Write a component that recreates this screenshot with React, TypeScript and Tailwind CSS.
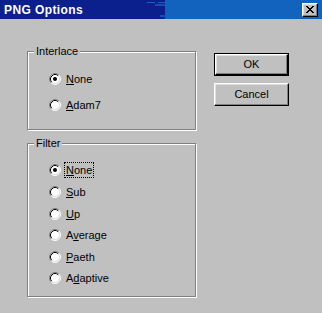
import React from "react";

function Radio({ checked }: { checked?: boolean }) {
  return (
    <svg width="12" height="12" viewBox="0 0 12 12" className="shrink-0">
      <circle cx="6" cy="6" r="5" fill="#ffffff" />
      <path d="M2.11 9.89 A5.5 5.5 0 0 1 9.89 2.11" fill="none" stroke="#808080" strokeWidth="1" />
      <path d="M9.89 2.11 A5.5 5.5 0 0 1 2.11 9.89" fill="none" stroke="#ffffff" strokeWidth="1" />
      <path d="M2.82 9.18 A4.5 4.5 0 0 1 9.18 2.82" fill="none" stroke="#000000" strokeWidth="1" />
      <path d="M9.18 2.82 A4.5 4.5 0 0 1 2.82 9.18" fill="none" stroke="#dfdfdf" strokeWidth="1" />
      {checked && <circle cx="6" cy="6" r="2" fill="#000000" />}
    </svg>
  );
}

function Label({ pre, key_, post }: { pre: string; key_: string; post: string }) {
  return (
    <>
      {pre}
      <span className="underline underline-offset-[1px]">{key_}</span>
      {post}
    </>
  );
}

function Row({
  h,
  checked,
  focus,
  pre,
  k,
  post,
}: {
  h: string;
  checked?: boolean;
  focus?: boolean;
  pre: string;
  k: string;
  post: string;
}) {
  return (
    <div className={`flex items-center ${h}`}>
      <Radio checked={checked} />
      {focus ? (
        <span className="ml-[3px] border border-dotted border-black px-[1px] leading-[14px]">
          <Label pre={pre} key_={k} post={post} />
        </span>
      ) : (
        <span className="ml-[5px] leading-[14px]">
          <Label pre={pre} key_={k} post={post} />
        </span>
      )}
    </div>
  );
}

function Group({ title, h, pt, children }: { title: string; h: string; pt: string; children: React.ReactNode }) {
  return (
    <div
      className={`relative w-[169px] ${h} border border-[#808080] shadow-[inset_1px_1px_0_#ffffff,1px_1px_0_#ffffff] ${pt} pl-[21px]`}
    >
      <span className="absolute left-[6px] top-[-8px] bg-[#c0c0c0] px-[2px] leading-[14px]">{title}</span>
      {children}
    </div>
  );
}

const btnInner =
  "flex items-center justify-center border border-t-white border-l-white border-b-black border-r-black shadow-[inset_-1px_-1px_0_#808080,inset_1px_1px_0_#dfdfdf]";

export default function App() {
  return (
    <div className="w-[322px] h-[313px] overflow-hidden bg-[#c0c0c0] font-['Liberation_Sans',Arial,sans-serif] text-[11px] text-black">
      <div className="relative flex h-[19px] items-center bg-[linear-gradient(to_right,#0b1f8d_0,#0b1f8d_165px,#1163be_165px,#1163be_100%)]">
        <div className="absolute left-[147px] top-[2px] h-[1px] w-[8px] bg-[#1a5ec0]" />
        <div className="absolute left-[158px] top-[2px] h-[1px] w-[7px] bg-[#1a5ec0]" />
        <div className="absolute left-[155px] top-[4px] h-[2px] w-[10px] bg-[#1552b0]" />
        <div className="absolute left-[160px] top-[15px] h-[2px] w-[6px] bg-[#1552b0]" />
        <span className="relative pl-[4px] text-[12px] font-bold leading-none tracking-[0.4px] text-white">PNG Options</span>
        <div className="relative ml-auto mr-[4px] flex h-[14px] w-[16px] items-center justify-center border border-t-white border-l-white border-b-black border-r-black bg-[#c0c0c0] shadow-[inset_-1px_-1px_0_#808080,inset_1px_1px_0_#dfdfdf]">
          <svg width="8" height="7" viewBox="0 0 8 7" shapeRendering="crispEdges">
            <path
              d="M0 0h2v1H0zM6 0h2v1H6zM1 1h2v1H1zM5 1h2v1H5zM2 2h4v1H2zM3 3h2v1H3zM2 4h4v1H2zM1 5h2v1H1zM5 5h2v1H5zM0 6h2v1H0zM6 6h2v1H6z"
              fill="#000"
            />
          </svg>
        </div>
      </div>

      <div className="flex pt-[32px]">
        <div className="ml-[27px] flex flex-col">
          <Group title="Interlace" h="h-[79px]" pt="pt-[14px]">
            <Row h="h-[26px]" checked pre="" k="N" post="one" />
            <Row h="h-[26px]" pre="" k="A" post="dam7" />
          </Group>
          <div className="mt-[13px]">
            <Group title="Filter" h="h-[154px]" pt="pt-[15px]">
              <Row h="h-[22px]" checked focus pre="" k="N" post="one" />
              <Row h="h-[22px]" pre="" k="S" post="ub" />
              <Row h="h-[21px]" pre="" k="U" post="p" />
              <Row h="h-[22px]" pre="A" k="v" post="erage" />
              <Row h="h-[21px]" pre="" k="P" post="aeth" />
              <Row h="h-[22px]" pre="A" k="d" post="aptive" />
            </Group>
          </div>
        </div>

        <div className="ml-[18px] mt-[2px] flex flex-col">
          <div className="h-[23px] w-[75px] border border-black">
            <div className={`h-full w-full ${btnInner}`}>OK</div>
          </div>
          <div className={`mt-[7px] h-[23px] w-[75px] ${btnInner}`}>Cancel</div>
        </div>
      </div>
    </div>
  );
}
